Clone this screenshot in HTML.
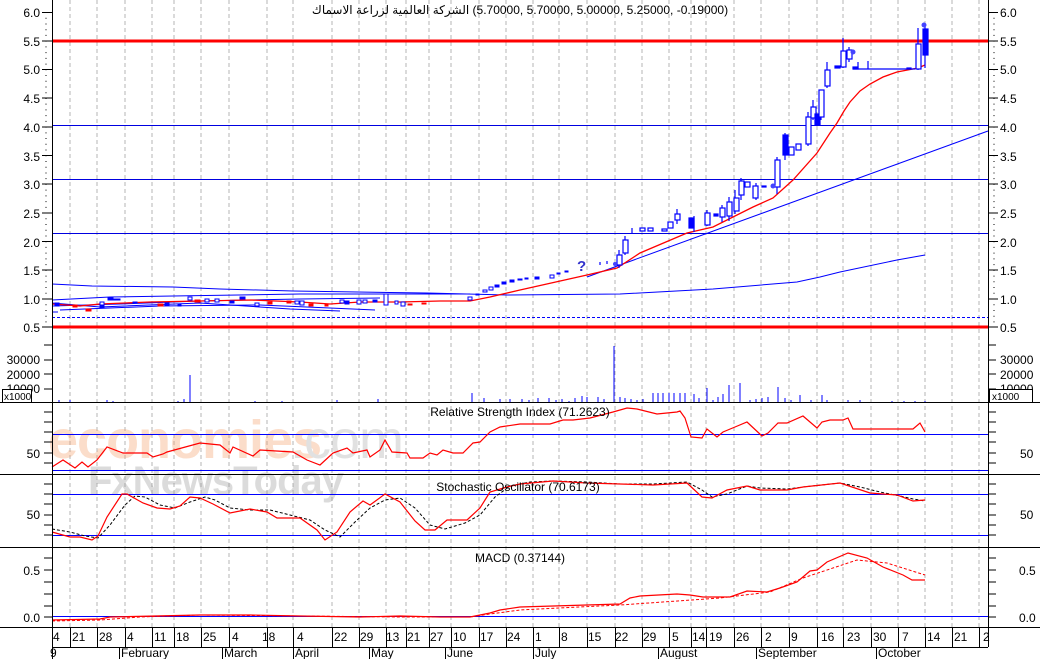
<!DOCTYPE html>
<html><head><meta charset="utf-8">
<style>
html,body{margin:0;padding:0;background:#fff;}
svg{display:block;font-family:"Liberation Sans","Noto Sans CJK SC",sans-serif;}
#t{position:absolute;left:0;top:3px;width:1040px;text-align:center;font:12px "Liberation Sans","DejaVu Sans",sans-serif;direction:ltr;white-space:nowrap;}
#t span{unicode-bidi:isolate;direction:rtl;}
</style></head><body>
<div style="position:relative;width:1040px;height:659px;">
<svg width="1040" height="659" viewBox="0 0 1040 659" xmlns="http://www.w3.org/2000/svg">
<rect width="1040" height="659" fill="#fff"/>
<g stroke="#b4b4b4" stroke-width="1" stroke-dasharray="4 3">
<path d="M70 0V627M97 0V627M125 0V627M152 0V627M174 0V627M201 0V627M229 0V627M267 0V627M293 0V627M332 0V627M359 0V627M386 0V627M406 0V627M429 0V627M451 0V627M479 0V627M506 0V627M533 0V627M559 0V627M587 0V627M615 0V627M642 0V627M669 0V627M691 0V627M706 0V627M734 0V627M761 0V627M789 0V627M817 0V627M843 0V627M871 0V627M898 0V627M925 0V627M952 0V627M979 0V627"/>
</g>
<g opacity="0.35">
<text x="48" y="458" font-size="54" font-weight="bold" fill="#f4a06a" letter-spacing="-1">economies</text>
<text x="290" y="458" font-size="54" fill="#aaa" letter-spacing="-1">.com</text>
<text x="88" y="494" font-size="40" font-weight="bold" fill="#999" letter-spacing="-1">FxNewsToday</text>
</g>
<path d="M52 41H988" stroke="#f00" stroke-width="3"/>
<path d="M52 327H988" stroke="#f00" stroke-width="3"/>
<path d="M52 125.5H988M52 179.5H988M52 233.5H988" stroke="#0000e0" stroke-width="1"/>
<path d="M52 317.5H988" stroke="#00f" stroke-dasharray="3 2"/>
<g stroke="#00f" fill="none" stroke-width="1">
<polyline points="52,284 92,286 173,287 220,289 293,291 427,293 507,295 620,294 713,289 797,282 820,277 840,272 897,260 925,255"/>
<polyline points="52,300 110,297 173,296 300,294 470,294"/>
<polyline points="52,306 120,304 200,301 300,299 380,298"/>
<polyline points="60,310 160,306 260,305 330,308 375,310"/>
<polyline points="52,303 100,307 200,303 290,309 340,311"/>
<polyline points="52,312 58,312"/>
<line x1="587" y1="277" x2="988" y2="131"/>
</g>
<polyline fill="none" stroke="#f00" stroke-width="1.3" points="52,304 80,306 100,304 150,302 200,301 250,300 300,302 330,304 360,302 400,302 440,301 470,301 490,297 520,290 587,275 617,268 640,253 687,233 713,227 753,207 773,198 793,180 817,153 830,133 837,123 844,111 850,102 860,91 870,84 883,77 897,72 918,68 925,65"/>
<g fill="#00f" stroke="#00f">
<rect x="55" y="303" width="4" height="3"/><rect x="73" y="305" width="4" height="2" fill="#f00" stroke="#f00"/><rect x="86" y="309" width="5" height="2" fill="#f00" stroke="#f00"/>
<rect x="100" y="302" width="4" height="6" fill="#fff"/><rect x="101" y="305" width="3" height="3"/><rect x="108" y="298" width="5" height="2"/><rect x="114" y="299" width="6" height="1"/>
<rect x="133" y="302" width="4" height="1"/><rect x="158" y="304" width="5" height="2" fill="#f00" stroke="#f00"/><rect x="165" y="303" width="4" height="2"/>
<rect x="178" y="304" width="3" height="2"/><rect x="188" y="297" width="4" height="3" fill="#fff"/><rect x="195" y="300" width="5" height="2" fill="#f00" stroke="#f00"/>
<rect x="205" y="299" width="4" height="3" fill="#fff"/><rect x="215" y="299" width="4" height="3" fill="#fff"/><rect x="230" y="301" width="4" height="2"/>
<rect x="240" y="297" width="5" height="2"/><rect x="255" y="303" width="4" height="3" fill="#fff"/><rect x="268" y="302" width="4" height="2" fill="#f00" stroke="#f00"/>
<rect x="287" y="301" width="4" height="2" fill="#f00" stroke="#f00"/><rect x="295" y="301" width="4" height="3" fill="#fff"/><rect x="300" y="301" width="4" height="4" fill="#fff"/>
<rect x="309" y="304" width="4" height="2" fill="#f00" stroke="#f00"/><rect x="325" y="304" width="3" height="2" fill="#f00" stroke="#f00"/>
<rect x="340" y="300" width="4" height="3" fill="#fff"/><rect x="345" y="301" width="4" height="3"/><rect x="357" y="300" width="4" height="4" fill="#fff"/><rect x="363" y="300" width="4" height="3" fill="#fff"/>
<rect x="373" y="300" width="4" height="2"/><rect x="384" y="294" width="4" height="11" fill="#fff"/><rect x="395" y="301" width="3" height="3" fill="#fff"/><rect x="401" y="302" width="4" height="4" fill="#fff"/>
<rect x="408" y="304" width="4" height="1" fill="#f00" stroke="#f00"/><rect x="422" y="303" width="4" height="1" fill="#f00" stroke="#f00"/>
<rect x="468" y="297" width="4" height="3" fill="#fff"/><rect x="476" y="294" width="3" height="1"/><rect x="483" y="290" width="4" height="2" fill="#fff"/><rect x="489" y="287" width="4" height="3" fill="#fff"/>
<rect x="495" y="285" width="4" height="2"/><rect x="502" y="282" width="4" height="2"/><rect x="510" y="280" width="4" height="2"/><rect x="518" y="279" width="4" height="1"/>
<rect x="525" y="278" width="3" height="1"/><rect x="535" y="277" width="4" height="2"/><rect x="550" y="275" width="4" height="3" fill="#fff"/><rect x="557" y="273" width="3" height="1"/><rect x="565" y="271" width="3" height="1"/>
</g>
<text x="577" y="271" font-size="15" font-weight="bold" fill="#33c">?</text>
<g fill="#fff" stroke="#00f" stroke-width="1.2">
<path d="M600 265V262M607 264V261M619 250V268M625 236V255M632 228V234M677 209V224M694 216V232M729 197V221M741 178V200M756 183V200M777 157V194M785 133V160M808 112V146M813 100V120M821 102V120M827 62V88M843 38V68M849 47V62M858 62V69M868 61V69M918 28V70M925 26V68M735 190V214M707 210V226M722 205V222" fill="none"/>
<line x1="853" y1="69" x2="915" y2="69"/>
<rect x="617" y="255" width="5" height="10"/>
<rect x="623" y="240" width="5" height="13"/>
<rect x="640" y="228" width="5" height="3"/>
<rect x="648" y="228" width="5" height="3"/>
<rect x="662" y="229" width="5" height="2"/>
<rect x="668" y="222" width="5" height="6"/>
<rect x="675" y="214" width="5" height="6"/>
<rect x="689" y="218" width="5" height="10" fill="#00f"/>
<rect x="705" y="213" width="5" height="12"/>
<rect x="714" y="214" width="4" height="2" fill="#00f"/>
<rect x="720" y="208" width="5" height="9"/>
<rect x="727" y="202" width="5" height="14"/>
<rect x="734" y="198" width="5" height="13"/>
<rect x="739" y="181" width="5" height="14"/>
<rect x="745" y="182" width="5" height="5"/>
<rect x="753" y="186" width="5" height="12"/>
<rect x="762" y="186" width="4" height="1" fill="#00f"/>
<rect x="775" y="160" width="5" height="27"/>
<rect x="783" y="135" width="5" height="20" fill="#00f"/>
<rect x="789" y="147" width="5" height="8"/>
<rect x="796" y="144" width="5" height="6"/>
<rect x="806" y="117" width="5" height="27"/>
<rect x="811" y="107" width="5" height="11"/>
<rect x="815" y="114" width="5" height="11" fill="#00f"/>
<rect x="819" y="90" width="5" height="27"/>
<rect x="825" y="70" width="5" height="16"/>
<rect x="835" y="66" width="5" height="2" fill="#00f"/>
<rect x="841" y="51" width="5" height="16"/>
<rect x="847" y="50" width="5" height="9"/>
<rect x="853" y="67" width="5" height="2" fill="#00f"/>
<rect x="907" y="68" width="4" height="1" fill="#00f"/>
<rect x="916" y="44" width="5" height="25"/>
<rect x="923" y="29" width="5" height="26" fill="#00f"/>
</g>
<g fill="#44f"><circle cx="853" cy="52" r="2.5"/><circle cx="924" cy="25" r="2.5"/><circle cx="615" cy="264" r="2"/><circle cx="773" cy="186" r="2.5"/></g>
<g stroke="#00f" stroke-width="1">
<path d="M59 402V400M70 402V400M107 402V400M113 402V401M178 402V401M184 402V399M190 402V375M255 402V401M282 402V401M337 402V400M378 402V399M472 402V393M484 402V398M500 402V399M510 402V399M522 402V399M529 402V400M538 402V398M549 402V398M556 402V400M562 402V399M569 402V401M575 402V398M582 402V396M587 402V397M598 402V397M604 402V399M614 402V346M620 402V397M625 402V398M631 402V399M637 402V400M643 402V399M653 402V393M658 402V393M663 402V393M669 402V393M674 402V393M680 402V393M685 402V393M694 402V394M699 402V398M707 402V388M713 402V400M718 402V397M723 402V394M729 402V385M740 402V383M750 402V400M756 402V399M762 402V398M768 402V397M778 402V387M785 402V398M791 402V400M800 402V395M811 402V400M822 402V395M827 402V400M848 402V400M860 402V400M892 402V401M904 402V401M915 402V401M925 402V401"/>
</g>
<path d="M52 434.5H988M52 470.5H988" stroke="#00f"/>
<polyline fill="none" stroke="#f00" stroke-width="1.2" points="52,467 63,460 75,468 82,462 88,467 97,460 107,447 123,453 147,453 153,457 163,454 167,452 200,443 220,445 230,453 233,447 253,456 260,450 293,452 307,460 320,465 333,453 347,448 353,453 367,450 370,457 380,450 385,440 392,452 407,453 410,458 423,458 430,453 437,455 443,450 453,453 463,453 473,443 480,442 490,432 500,427 520,424 550,424 563,420 573,420 590,418 613,412 627,408 637,409 657,414 677,412 680,411 685,418 691,437 702,438 707,429 717,437 723,432 735,427 747,422 762,436 768,433 778,423 787,423 803,416 817,428 822,422 830,420 843,420 848,418 853,429 913,429 920,423 925,432"/>
<text x="520" y="416" font-size="12" text-anchor="middle">Relative Strength Index (71.2623)</text>
<path d="M52 494.5H988M52 535.5H988" stroke="#00f"/>
<polyline fill="none" stroke="#000" stroke-width="1" stroke-dasharray="3 2" points="52,529 70,532 85,536 98,538 110,525 125,505 135,496 145,497 160,505 175,508 190,502 205,497 215,500 230,508 250,510 270,510 290,515 310,520 325,530 340,537 355,522 370,508 385,500 400,498 415,508 430,525 445,529 465,523 480,515 495,497 510,486 530,482 553,481 587,482 620,484 653,484 687,482 702,490 712,497 727,494 747,486 760,488 787,489 803,487 840,483 860,487 880,492 900,496 913,499 925,501"/>
<polyline fill="none" stroke="#f00" stroke-width="1.2" points="52,532 70,537 80,537 92,540 98,536 107,517 122,494 127,494 143,503 157,508 170,509 180,506 190,497 200,498 213,504 230,513 250,509 267,512 277,518 300,518 317,530 325,540 337,532 350,512 363,501 370,505 385,494 400,502 415,521 425,530 435,530 447,520 467,520 480,508 490,492 507,487 520,484 553,481 587,483 620,484 653,485 687,483 702,497 712,498 727,490 747,486 760,490 787,490 803,487 840,483 870,493 897,495 913,501 925,500"/>
<text x="518" y="491" font-size="12" text-anchor="middle">Stochastic Oscillator (70.6173)</text>
<path d="M52 616.5H988" stroke="#00f"/>
<polyline fill="none" stroke="#f00" stroke-width="1" stroke-dasharray="3 2" points="52,621 100,620 140,617 200,615 300,616 400,617 470,617 490,614 520,610 620,605 720,598 770,592 803,578 857,560 887,563 925,575"/>
<polyline fill="none" stroke="#f00" stroke-width="1.2" points="52,620 100,619 110,617 200,615 250,615 300,616 360,617 400,616 440,617 470,617 490,613 500,610 520,607 620,604 630,598 640,596 677,594 690,595 703,597 730,597 747,591 767,592 780,588 797,582 810,571 817,570 827,562 848,553 867,558 883,567 903,575 912,580 925,580"/>
<text x="520" y="562" font-size="12" text-anchor="middle">MACD (0.37144)</text>
<path d="M0 402.5H1040M0 474.5H1040M0 547.5H1040M0 627.5H1040M52 647.5H988" stroke="#000"/>
<path d="M52.5 0V659M988.5 0V647" stroke="#000"/>
<g stroke="#000">
<path d="M46 12V327" stroke-dasharray="1 4.73" stroke-width="1"/>
<path d="M42 12.5H52M42 41H52M42 69.5H52M42 98H52M42 127H52M42 155.5H52M42 184H52M42 213H52M42 241.5H52M42 270H52M42 299H52M42 327H52"/>
<path d="M988 12.5H998M988 41H998M988 69.5H998M988 98H998M988 127H998M988 155.5H998M988 184H998M988 213H998M988 241.5H998M988 270H998M988 299H998M988 327H998"/>
<path d="M994 12V327" stroke-dasharray="1 4.73"/>
<path d="M44 345H52M44 360H52M44 374H52M44 389H52M44 412H52M44 422H52M44 432H52M44 442H52M44 453H52M44 463H52M44 484H52M44 494H52M44 504H52M44 515H52M44 525H52M44 535H52M44 558H52M44 570H52M44 582H52M44 594H52M44 606H52M44 617H52"/>
<path d="M988 345H996M988 360H996M988 374H996M988 389H996M988 412H996M988 422H996M988 432H996M988 442H996M988 453H996M988 463H996M988 484H996M988 494H996M988 504H996M988 515H996M988 525H996M988 535H996M988 558H996M988 570H996M988 582H996M988 594H996M988 606H996M988 617H996"/>
</g>
<g font-size="12" fill="#000">
<g text-anchor="end">
<text x="40" y="17">6.0</text><text x="40" y="46">5.5</text><text x="40" y="74">5.0</text><text x="40" y="103">4.5</text><text x="40" y="132">4.0</text><text x="40" y="161">3.5</text><text x="40" y="189">3.0</text><text x="40" y="218">2.5</text><text x="40" y="247">2.0</text><text x="40" y="275">1.5</text><text x="40" y="304">1.0</text><text x="40" y="332">0.5</text>
<text x="40" y="364">30000</text><text x="40" y="379">20000</text><text x="40" y="393">10000</text>
<text x="40" y="458">50</text><text x="40" y="519">50</text><text x="40" y="575">0.5</text><text x="40" y="622">0.0</text>
</g>
<text x="1000" y="17">6.0</text><text x="1000" y="46">5.5</text><text x="1000" y="74">5.0</text><text x="1000" y="103">4.5</text><text x="1000" y="132">4.0</text><text x="1000" y="161">3.5</text><text x="1000" y="189">3.0</text><text x="1000" y="218">2.5</text><text x="1000" y="247">2.0</text><text x="1000" y="275">1.5</text><text x="1000" y="304">1.0</text><text x="1000" y="332">0.5</text>
<text x="1000" y="364">30000</text><text x="1000" y="379">20000</text><text x="1000" y="393">10000</text>
<text x="1020" y="458">50</text><text x="1020" y="519">50</text><text x="1019" y="575">0.5</text><text x="1019" y="622">0.0</text>
</g>
<rect x="2.5" y="389.5" width="29" height="13" fill="#fff" stroke="#000"/>
<text x="4" y="400" font-size="10">x1000</text>
<rect x="989.5" y="389.5" width="43" height="13" fill="#fff" stroke="#000"/>
<text x="992" y="400" font-size="10">x1000</text>
<g stroke="#000">
<path d="M70.5 627V647M97.5 627V647M125.5 627V647M152.5 627V647M174.5 627V647M201.5 627V647M229.5 627V647M267.5 627V647M293.5 627V647M332.5 627V647M359.5 627V647M386.5 627V647M406.5 627V647M429.5 627V647M451.5 627V647M479.5 627V647M506.5 627V647M533.5 627V647M559.5 627V647M587.5 627V647M615.5 627V647M642.5 627V647M669.5 627V647M691.5 627V647M706.5 627V647M734.5 627V647M761.5 627V647M789.5 627V647M817.5 627V647M843.5 627V647M871.5 627V647M898.5 627V647M925.5 627V647M952.5 627V647M979.5 627V647"/>
<path d="M119.5 647V659M222.5 647V659M293.5 647V659M369.5 647V659M445.5 647V659M533.5 647V659M658.5 647V659M756.5 647V659M876.5 647V659"/>
</g>
<g font-size="12" fill="#000">
<text x="53" y="641">4</text><text x="72" y="641">21</text><text x="99" y="641">28</text><text x="127" y="641">4</text><text x="154" y="641">11</text><text x="176" y="641">18</text><text x="203" y="641">25</text><text x="232" y="641">4</text><text x="262" y="641">18</text><text x="297" y="641">4</text><text x="334" y="641">22</text><text x="360" y="641">29</text><text x="386" y="641">13</text><text x="407" y="641">21</text><text x="430" y="641">27</text><text x="453" y="641">10</text><text x="480" y="641">17</text><text x="507" y="641">24</text><text x="535" y="641">1</text><text x="561" y="641">8</text><text x="588" y="641">15</text><text x="615" y="641">22</text><text x="643" y="641">29</text><text x="672" y="641">5</text><text x="692" y="641">14</text><text x="709" y="641">19</text><text x="736" y="641">26</text><text x="765" y="641">2</text><text x="791" y="641">9</text><text x="821" y="641">16</text><text x="847" y="641">23</text><text x="873" y="641">30</text><text x="902" y="641">7</text><text x="927" y="641">14</text><text x="954" y="641">21</text><text x="983" y="641">2</text>
<text x="50" y="657">9</text><text x="121" y="657">February</text><text x="224" y="657">March</text><text x="295" y="657">April</text><text x="371" y="657">May</text><text x="447" y="657">June</text><text x="535" y="657">July</text><text x="660" y="657">August</text><text x="758" y="657">September</text><text x="878" y="657">October</text>
</g>
</svg>
<div id="t" dir="ltr"><span dir="rtl">الشركة العالمية لزراعة الاسماك</span>&lrm; (5.70000, 5.70000, 5.00000, 5.25000, -0.19000)</div>
</div>
</body></html>
